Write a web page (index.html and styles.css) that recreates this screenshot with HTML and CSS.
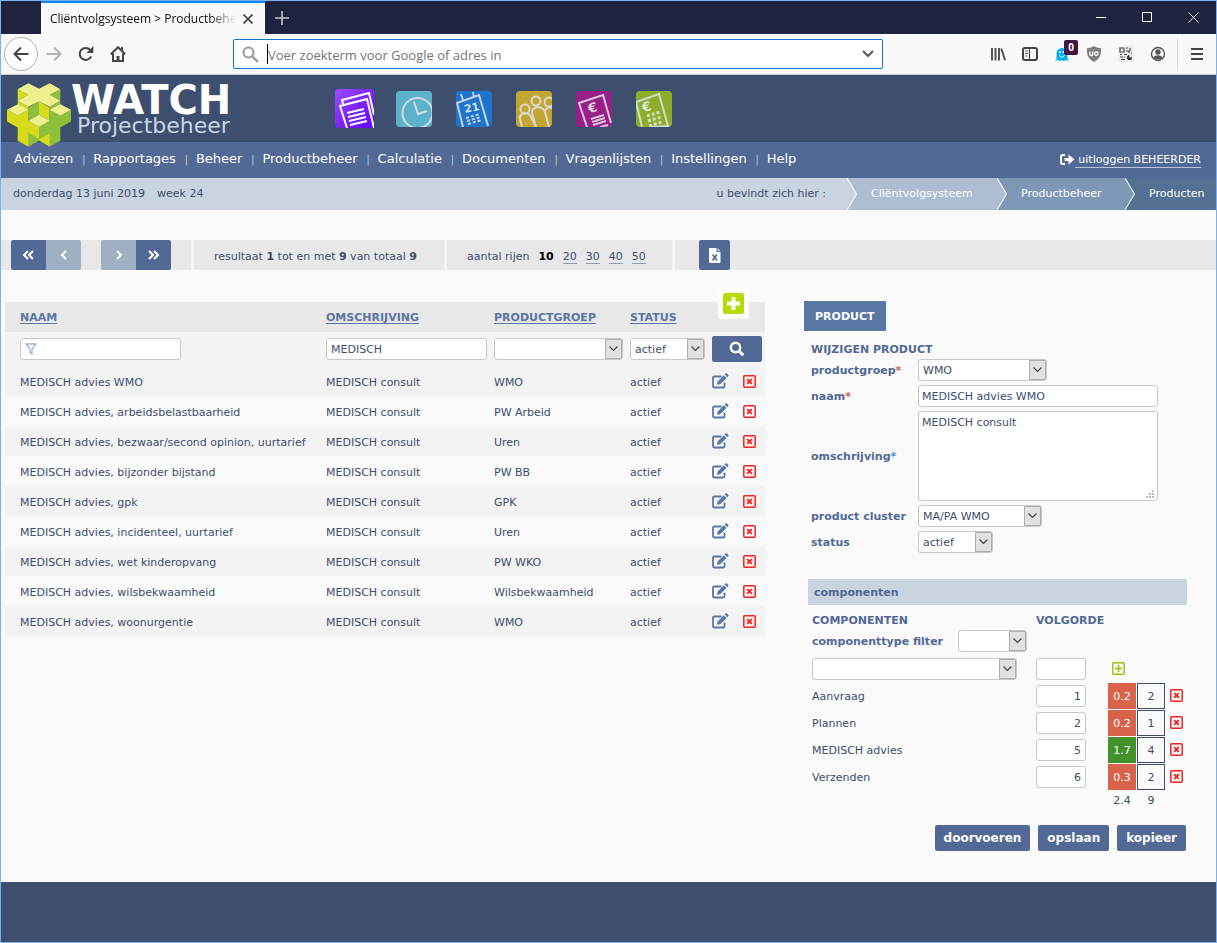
FILE: index.html
```html
<!DOCTYPE html>
<html lang="nl">
<head>
<meta charset="utf-8">
<meta name="viewport" content="width=device-width, initial-scale=1">
<title>Cliëntvolgsysteem &gt; Productbeheer</title>
<link rel="stylesheet" href="styles.css">
</head>
<body>
<svg class="sprite" aria-hidden="true">
  <symbol id="edit" viewBox="0 0 17 16"><path d="M9.5 3.5H2.200a1.200 1.200 0 0 0-1.200 1.200v8.600a1.200 1.200 0 0 0 1.200 1.200h9.100a1.200 1.200 0 0 0 1.200-1.200V9.500" fill="none" stroke="#5a76a3" stroke-width="1.800"/><path d="M5 11.800l.6-3.200 6.300-6.300 2.600 2.600-6.300 6.300zM12.600 1.600l1-1a1 1 0 0 1 1.400 0l1.200 1.200a1 1 0 0 1 0 1.400l-1 1z" fill="#5a76a3"/></symbol>
  <symbol id="remove" viewBox="0 0 13 13"><rect x=".8" y=".8" width="11.400" height="11.400" rx="1" fill="none" stroke="#f22020" stroke-width="1.500"/><path d="M4.200 4.200l4.600 4.600M8.800 4.200L4.200 8.800" stroke="#f22020" stroke-width="1.800"/></symbol>
</svg>

<div class="window">
  <header class="titlebar">
    <div class="tab">
      <span class="tab-title">Cliëntvolgsysteem &gt; Productbeheer</span>
      <button class="tab-close" aria-label="Tabblad sluiten"><svg width="10" height="10"><path d="M.5.5l9 9M9.500.5l-9 9" stroke="#444" stroke-width="1.600"/></svg></button>
    </div>
    <button class="tab-new" aria-label="Nieuw tabblad"><svg width="14" height="14"><path d="M7 0v14M0 7h14" stroke="#c4c4cc" stroke-width="1.600"/></svg></button>
    <div class="window-controls">
      <button aria-label="Minimaliseren"><svg width="11" height="11"><path d="M0 5.500h10" stroke="#fff"/></svg></button>
      <button aria-label="Maximaliseren"><svg width="11" height="11"><path d="M.5.5h9v9h-9z" fill="none" stroke="#fff"/></svg></button>
      <button aria-label="Sluiten"><svg width="11" height="11"><path d="M.5.5l10 10M10.500.5l-10 10" stroke="#fff"/></svg></button>
    </div>
  </header>

  <div class="browserbar">
    <button class="back" aria-label="Terug"><svg width="16" height="16"><path d="M15.500 8H1.500M8 1.500L1.500 8 8 14.500" fill="none" stroke="#444" stroke-width="2"/></svg></button>
    <button class="tool" aria-label="Vooruit"><svg width="16" height="16"><path d="M.5 8h14M8 1.500L14.500 8 8 14.500" fill="none" stroke="#b4b4b4" stroke-width="2"/></svg></button>
    <button class="tool" aria-label="Vernieuwen"><svg width="16" height="16"><path d="M13.200 10.400A6 6 0 1 1 12.300 4" fill="none" stroke="#444" stroke-width="2"/><path d="M15.300 0v7H8.600z" fill="#444"/></svg></button>
    <button class="tool" aria-label="Startpagina"><svg width="16" height="16"><path d="M.8 8.200L8 1.200l7.200 7M3 7.500V15h10V7.500" fill="none" stroke="#444" stroke-width="2"/><path d="M6.500 15V10h3v5z" fill="#444"/><path d="M11 1h2v4l-2-2z" fill="#444"/></svg></button>
    <span class="spacer"></span>
    <div class="urlbar">
      <svg width="17" height="17"><circle cx="6.500" cy="6.500" r="5" fill="none" stroke="#999" stroke-width="2"/><path d="M10 10l6 6" stroke="#999" stroke-width="2.400"/></svg>
      <input type="text" aria-label="Adres" placeholder="Voer zoekterm voor Google of adres in">
      <svg width="12" height="8"><path d="M1 1l5 5 5-5" fill="none" stroke="#555" stroke-width="2"/></svg>
    </div>
    <span class="spacer"></span>
    <button class="tool" aria-label="Bibliotheek"><svg width="16" height="16"><path d="M2 2v12.500M5.500 2v12.500M9 2v12.500M11.300 2.500L15 14.300" stroke="#555" stroke-width="2"/></svg></button>
    <button class="tool" aria-label="Zijbalk"><svg width="16" height="16"><rect x="1" y="2" width="14" height="12" rx="2" fill="none" stroke="#444" stroke-width="2"/><path d="M7.500 2v12" stroke="#444"/><path d="M3 5h3M3 7.500h3M3 10h2" stroke="#666"/></svg></button>
    <button class="tool ghost" aria-label="Ghostery"><svg width="16" height="16"><path d="M2.500 13.500V7.500a5.500 5.500 0 0 1 11 0v5l1 2.500-3-1-1.700 1.200L8 14l-2 1.200L4.300 14 1 15z" fill="#00aef0"/><path d="M5.500 9c.5 3 4 3 5 0" fill="none" stroke="#fff"/><circle cx="6" cy="6" r="1" fill="#fff"/><circle cx="9.500" cy="6" r="1" fill="#fff"/></svg><span class="badge">0</span></button>
    <button class="tool" aria-label="uBlock"><svg width="16" height="16"><path d="M8 0c2 1.500 4.500 2 7 2 .4 7-1 11-7 14C2 13 .6 9 1 2c2.500 0 5-.5 7-2z" fill="#808080"/><path d="M4 5.500v2.700a1.400 1.400 0 0 0 2.800 0V5.500" fill="none" stroke="#fff" stroke-width="1.300"/><circle cx="10.300" cy="7.700" r="1.700" fill="none" stroke="#fff" stroke-width="1.300"/></svg></button>
    <button class="tool" aria-label="QR-code"><svg width="16" height="16"><rect width="16" height="16" fill="#eee"/><path d="M2 2h4v4H2zM8 2h2M12 2v3M8 5h3v2M13 7h1M2 8.500h2M6 8.500h3M2 11h3M3 13.500h4M6 11h1" fill="none" stroke="#444" stroke-width="1.200"/><circle cx="11.500" cy="11.500" r="2.600" fill="#333"/><path d="M11.500 11.500V8.500h3v3z" fill="#eee"/></svg></button>
    <button class="tool" aria-label="Account"><svg width="16" height="16"><circle cx="8" cy="8" r="6.500" fill="none" stroke="#555" stroke-width="1.400"/><circle cx="8" cy="6" r="2.700" fill="#555"/><path d="M3.500 11.500c2-3 7-3 9 0C10.500 14.300 5.500 14.300 3.500 11.500z" fill="#555"/></svg></button>
    <button class="tool menu" aria-label="Menu"><svg width="12" height="12"><path d="M0 1h12M0 6h12M0 11h12" stroke="#444" stroke-width="2"/></svg></button>
  </div>

  <div class="app-header">
    <a class="logo" href="#" aria-label="Watch Projectbeheer">
      <svg class="cube" width="64" height="64" viewBox="15 17 192 191">
        <path fill="#d7db1c" d="M47 35l32 17-32 18zM15 97l32 17 32-17v33l32 18v40l-32 19-32-17v-40l-32-18zM111 72l32 18v40l-32-18zM111 148v40l32 19v-77z"/>
        <path fill="#8fc03c" d="M175 35l-32 17 32 18zM111 72L79 90v40l32-18zM79 207v-42l32 20v4zM111 148l32-18v38l-32 17zM143 97l32 17 32-17v35l-32 18v40l-32 17z"/>
        <path fill="#d7db1c" d="M111 187l32-19v39l-32-19zM47 70l32 18v20L47 82z"/>
        <path fill="#8fc03c" d="M143 88l32-18v25l-32 15z"/>
        <path fill="#eef08e" d="M79 17l32 17 32-17 32 18-32 17 32 18-32 18-32-16-32 16-32-18 32-18-32-17zM15 97l32-17 32 17-32 17zM207 97l-32-17-32 17 32 17zM111 112l32 18-32 18-32-18z"/>
      </svg>
      <span class="wordmark"><b>WATCH</b><span>Projectbeheer</span></span>
    </a>
    <div class="apps">
      <a href="#" class="app app-active" aria-label="Adviezen"><svg viewBox="0 0 39 39"><defs><linearGradient id="g1" x2="1" y2="1"><stop stop-color="#9a4cff"/><stop offset="1" stop-color="#6100ff"/></linearGradient></defs><rect width="39" height="39" rx="4" fill="url(#g1)"/><g fill="none" stroke="#fff" stroke-width="2"><path d="M8 15l-1-4L34 4l5 22"/><path d="M12 39L5 17l27-7 7 29"/><path d="M12 24l17-4M13 28l17-4M14 32l17-4M15 36l17-4"/></g></svg></a>
      <a href="#" class="app" aria-label="Uren"><svg viewBox="0 0 36 36"><rect width="36" height="36" rx="4" fill="#5bb2c9"/><g fill="none" stroke="#d0dce4" stroke-width="2"><circle cx="21.500" cy="22" r="15"/><path d="M18 11l4 12 9-3"/></g></svg></a>
      <a href="#" class="app" aria-label="Agenda"><svg viewBox="0 0 36 36"><rect width="36" height="36" rx="4" fill="#1d74cd"/><g fill="none" stroke="#c6d2e2" stroke-width="2"><path d="M7 36L1 12l22-8 9 31M5 3l2 6M17 1l1 6"/><path d="M10 27l14-4M11 30l14-4M12 33l14-4" stroke-dasharray="3 2"/></g><text x="9" y="22" transform="rotate(-12 9 22)" fill="#d6dfe9" class="day">21</text></svg></a>
      <a href="#" class="app" aria-label="Relaties"><svg viewBox="0 0 36 36"><rect width="36" height="36" rx="4" fill="#c2a631"/><g fill="none" stroke="#dcd8cf" stroke-width="2"><circle cx="9" cy="18" r="4.500"/><circle cx="20" cy="10" r="4.500"/><circle cx="33" cy="11" r="4.500"/><path d="M6 36L4 28c-1-6 8-8 11-2l5 10M20 36l-4-14c0-7 10-8 13-1l4 15M29 20c1-3 4-4 7-3"/></g></svg></a>
      <a href="#" class="app" aria-label="Facturen"><svg viewBox="0 0 36 36"><rect width="36" height="36" rx="4" fill="#991f88"/><g fill="none" stroke="#d8c6da" stroke-width="2"><path d="M11 36L3 12l24-8 8 28"/><path d="M15 28l13-4M16 31l13-4M17 34l13-4M24 36l8-2"/></g><text x="13" y="22" transform="rotate(-12 13 22)" fill="#e0d3e2" class="euro">€</text></svg></a>
      <a href="#" class="app" aria-label="Calculatie"><svg viewBox="0 0 36 36"><rect width="36" height="36" rx="4" fill="#8ead2c"/><g fill="none" stroke="#d3dccb" stroke-width="2"><path d="M6 36L0 11l23-8 9 32-17 1"/><path d="M11 25l13-4M12 30l13-4M13 35l13-4" stroke-width="3" stroke-dasharray="3 2"/></g><text x="7" y="21" transform="rotate(-12 7 21)" fill="#dfe5d8" class="euro">€</text></svg></a>
    </div>
  </div>

  <nav class="nav">
    <ul class="nav-list">
      <li><a href="#">Adviezen</a></li><li><a href="#">Rapportages</a></li><li><a href="#">Beheer</a></li><li><a href="#">Productbeheer</a></li><li><a href="#">Calculatie</a></li><li><a href="#">Documenten</a></li><li><a href="#">Vragenlijsten</a></li><li><a href="#">Instellingen</a></li><li><a href="#">Help</a></li>
    </ul>
    <a class="logout" href="#"><svg width="15" height="12" aria-hidden="true"><path d="M5 1H2.500A1.500 1.500 0 0 0 1 2.500v6A1.500 1.500 0 0 0 2.500 10H5" fill="none" stroke="#fff" stroke-width="2"/><path d="M4.500 4h4V.5L14.500 5.500l-6 5V7h-4z" fill="#fff"/></svg><span>&nbsp;uitloggen BEHEERDER</span></a>
  </nav>

  <div class="trail">
    <span class="date">donderdag 13 juni 2019</span><span>week 24</span>
    <span class="here">u bevindt zich hier :</span>
    <a class="crumb crumb-1" href="#"><svg width="10" height="32"><path d="M0 0l10 16L0 32z" fill="#cad4e0"/><path d="M0 0l9.500 16L0 32" fill="none" stroke="#f4f7fa" stroke-width="1.200"/></svg>Cliëntvolgsysteem</a>
    <a class="crumb crumb-2" href="#"><svg width="10" height="32"><path d="M0 0l10 16L0 32z" fill="#aebdd1"/><path d="M0 0l9.500 16L0 32" fill="none" stroke="#f4f7fa" stroke-width="1.200"/></svg>Productbeheer</a>
    <a class="crumb crumb-3" href="#"><svg width="10" height="32"><path d="M0 0l10 16L0 32z" fill="#7e97b7"/><path d="M0 0l9.500 16L0 32" fill="none" stroke="#dfe7ef" stroke-width="1.200"/></svg>Producten</a>
  </div>

  <main class="main">
    <div class="pager">
      <div class="pager-group pager-nav">
        <span class="pair"><button aria-label="Eerste"><svg width="13" height="10"><path d="M6 1L2 5l4 4M11 1L7 5l4 4" fill="none" stroke="#fff" stroke-width="2"/></svg></button><button class="off" disabled aria-label="Vorige"><svg width="8" height="10"><path d="M6 1L2 5l4 4" fill="none" stroke="#fff" stroke-width="2"/></svg></button></span>
        <span class="pair"><button class="off" disabled aria-label="Volgende"><svg width="8" height="10"><path d="M2 1l4 4-4 4" fill="none" stroke="#fff" stroke-width="2"/></svg></button><button aria-label="Laatste"><svg width="13" height="10"><path d="M2 1l4 4-4 4M7 1l4 4-4 4" fill="none" stroke="#fff" stroke-width="2"/></svg></button></span>
      </div>
      <div class="pager-group pager-result"><span>resultaat <b>1</b> tot en met <b>9</b> van totaal <b>9</b></span></div>
      <div class="pager-group pager-rows"><span>aantal rijen</span><b>10</b><a href="#">20</a><a href="#">30</a><a href="#">40</a><a href="#">50</a></div>
      <div class="pager-group pager-export"><button aria-label="Excel"><svg width="12" height="15"><path d="M1 0h6.500v4H11.500v10a1 1 0 0 1-1 1H1a1 1 0 0 1-1-1V1a1 1 0 0 1 1-1z" fill="#fff"/><path d="M8.500 0l3 3h-3z" fill="#d5dceb"/><path d="M3.500 6.500l4.500 6M8 6.500l-4.500 6" stroke="#536995" stroke-width="1.700"/></svg></button></div>
    </div>

    <div class="panels">
      <section class="list">
        <button class="add" aria-label="Toevoegen"><svg width="21" height="21"><rect width="21" height="21" rx="2" fill="#b4dc00"/><path d="M10.500 4v13M4 10.500h13" stroke="#fff" stroke-width="4"/></svg></button>
        <table class="products">
          <colgroup><col class="c-name"><col class="c-desc"><col class="c-group"><col class="c-status"><col class="c-act"></colgroup>
          <thead>
            <tr><th><a href="#">NAAM</a></th><th><a href="#">OMSCHRIJVING</a></th><th><a href="#">PRODUCTGROEP</a></th><th><a href="#">STATUS</a></th><th></th></tr>
          </thead>
          <tbody>
            <tr class="filter">
              <td><input class="field w-filter funnel" type="text" aria-label="Naam"></td>
              <td><input class="field w-filter" type="text" aria-label="Omschrijving" value="MEDISCH"></td>
              <td><select class="field w-129" aria-label="Productgroep"><option></option></select></td>
              <td><select class="field w-75" aria-label="Status"><option>actief</option></select></td>
              <td><button class="search" aria-label="Zoeken"><svg width="16" height="16"><circle cx="6.500" cy="6.500" r="4.700" fill="none" stroke="#fff" stroke-width="2.400"/><path d="M9.800 9.800l4.500 4.500" stroke="#fff" stroke-width="3"/></svg></button></td>
            </tr>
            <tr><td>MEDISCH advies WMO</td><td>MEDISCH consult</td><td>WMO</td><td>actief</td><td><div class="acts"><button aria-label="Bewerken"><svg width="17" height="16"><use href="#edit"/></svg></button><button aria-label="Verwijderen"><svg width="13" height="13"><use href="#remove"/></svg></button></div></td></tr>
            <tr><td>MEDISCH advies, arbeidsbelastbaarheid</td><td>MEDISCH consult</td><td>PW Arbeid</td><td>actief</td><td><div class="acts"><button aria-label="Bewerken"><svg width="17" height="16"><use href="#edit"/></svg></button><button aria-label="Verwijderen"><svg width="13" height="13"><use href="#remove"/></svg></button></div></td></tr>
            <tr><td>MEDISCH advies, bezwaar/second opinion, uurtarief</td><td>MEDISCH consult</td><td>Uren</td><td>actief</td><td><div class="acts"><button aria-label="Bewerken"><svg width="17" height="16"><use href="#edit"/></svg></button><button aria-label="Verwijderen"><svg width="13" height="13"><use href="#remove"/></svg></button></div></td></tr>
            <tr><td>MEDISCH advies, bijzonder bijstand</td><td>MEDISCH consult</td><td>PW BB</td><td>actief</td><td><div class="acts"><button aria-label="Bewerken"><svg width="17" height="16"><use href="#edit"/></svg></button><button aria-label="Verwijderen"><svg width="13" height="13"><use href="#remove"/></svg></button></div></td></tr>
            <tr><td>MEDISCH advies, gpk</td><td>MEDISCH consult</td><td>GPK</td><td>actief</td><td><div class="acts"><button aria-label="Bewerken"><svg width="17" height="16"><use href="#edit"/></svg></button><button aria-label="Verwijderen"><svg width="13" height="13"><use href="#remove"/></svg></button></div></td></tr>
            <tr><td>MEDISCH advies, incidenteel, uurtarief</td><td>MEDISCH consult</td><td>Uren</td><td>actief</td><td><div class="acts"><button aria-label="Bewerken"><svg width="17" height="16"><use href="#edit"/></svg></button><button aria-label="Verwijderen"><svg width="13" height="13"><use href="#remove"/></svg></button></div></td></tr>
            <tr><td>MEDISCH advies, wet kinderopvang</td><td>MEDISCH consult</td><td>PW WKO</td><td>actief</td><td><div class="acts"><button aria-label="Bewerken"><svg width="17" height="16"><use href="#edit"/></svg></button><button aria-label="Verwijderen"><svg width="13" height="13"><use href="#remove"/></svg></button></div></td></tr>
            <tr><td>MEDISCH advies, wilsbekwaamheid</td><td>MEDISCH consult</td><td>Wilsbekwaamheid</td><td>actief</td><td><div class="acts"><button aria-label="Bewerken"><svg width="17" height="16"><use href="#edit"/></svg></button><button aria-label="Verwijderen"><svg width="13" height="13"><use href="#remove"/></svg></button></div></td></tr>
            <tr><td>MEDISCH advies, woonurgentie</td><td>MEDISCH consult</td><td>WMO</td><td>actief</td><td><div class="acts"><button aria-label="Bewerken"><svg width="17" height="16"><use href="#edit"/></svg></button><button aria-label="Verwijderen"><svg width="13" height="13"><use href="#remove"/></svg></button></div></td></tr>
          </tbody>
        </table>
      </section>

      <form class="detail">
        <a class="detail-tab" href="#">PRODUCT</a>
        <h2 class="detail-title">WIJZIGEN PRODUCT</h2>
        <div class="form-grid">
          <label for="groep">productgroep<span class="req">*</span></label>
          <select id="groep" class="field w-129"><option>WMO</option></select>
          <label for="naam">naam<span class="req">*</span></label>
          <input id="naam" class="field w-wide" type="text" value="MEDISCH advies WMO">
          <label for="oms">omschrijving<span class="opt">*</span></label>
          <textarea id="oms" class="field w-wide">MEDISCH consult</textarea>
          <label for="cluster">product cluster</label>
          <select id="cluster" class="field w-124"><option>MA/PA WMO</option></select>
          <label for="status">status</label>
          <select id="status" class="field w-75"><option>actief</option></select>
        </div>

        <h3 class="bar">componenten</h3>
        <table class="components">
          <colgroup><col class="k-name"><col class="k-order"><col class="k-a"><col class="k-b"><col></colgroup>
          <thead>
            <tr><th>COMPONENTEN</th><th colspan="4">VOLGORDE</th></tr>
            <tr class="type-row"><th colspan="5"><span class="type"><label for="ctype">componenttype filter</label><select id="ctype" class="field w-69"><option></option></select></span></th></tr>
          </thead>
          <tbody>
            <tr><td><select class="field w-205" aria-label="Component"><option></option></select></td><td><input class="field w-50" type="text" aria-label="Volgorde"></td><td colspan="3"><button class="icon-btn plus" type="button" aria-label="Toevoegen"><svg width="13" height="13"><rect x=".8" y=".8" width="11.400" height="11.400" rx="1" fill="none" stroke="#a0c010" stroke-width="1.500"/><path d="M6.500 3v7M3 6.500h7" stroke="#a0c010" stroke-width="1.600"/></svg></button></td></tr>
            <tr><td class="name">Aanvraag</td><td><input class="field w-50" type="text" aria-label="Volgorde Aanvraag" value="1"></td><td><span class="chip red">0.2</span></td><td><span class="chip box">2</span></td><td><button class="icon-btn" type="button" aria-label="Verwijderen"><svg width="13" height="13"><use href="#remove"/></svg></button></td></tr>
            <tr><td class="name">Plannen</td><td><input class="field w-50" type="text" aria-label="Volgorde Plannen" value="2"></td><td><span class="chip red">0.2</span></td><td><span class="chip box">1</span></td><td><button class="icon-btn" type="button" aria-label="Verwijderen"><svg width="13" height="13"><use href="#remove"/></svg></button></td></tr>
            <tr><td class="name">MEDISCH advies</td><td><input class="field w-50" type="text" aria-label="Volgorde MEDISCH advies" value="5"></td><td><span class="chip green">1.7</span></td><td><span class="chip box">4</span></td><td><button class="icon-btn" type="button" aria-label="Verwijderen"><svg width="13" height="13"><use href="#remove"/></svg></button></td></tr>
            <tr><td class="name">Verzenden</td><td><input class="field w-50" type="text" aria-label="Volgorde Verzenden" value="6"></td><td><span class="chip red">0.3</span></td><td><span class="chip box">2</span></td><td><button class="icon-btn" type="button" aria-label="Verwijderen"><svg width="13" height="13"><use href="#remove"/></svg></button></td></tr>
          </tbody>
          <tfoot><tr><td></td><td></td><td><span class="sum">2.4</span></td><td><span class="sum">9</span></td><td></td></tr></tfoot>
        </table>
        <div class="buttons"><button type="button">doorvoeren</button><button type="button">opslaan</button><button type="button">kopieer</button></div>
      </form>
    </div>
  </main>
  <footer class="footer"></footer>
</div>
</body>
</html>
```

FILE: styles.css
```css
*, *::before, *::after { box-sizing: border-box; }
body { margin: 0; background: #fafafa; color: #3d4e6e; font: 11px/16px "DejaVu Sans", Verdana, sans-serif; }
button, input, select, textarea { font: inherit; color: inherit; margin: 0; }
button { border: 0; padding: 0; background: none; display: flex; align-items: center; justify-content: center; cursor: pointer; }
svg { display: block; flex: none; }
a { color: inherit; text-decoration: none; }
.sprite { position: absolute; width: 0; height: 0; }
.window { min-height: 100vh; display: flex; flex-direction: column; border: 1px solid #7ab4f0; }

/* Browser chrome */
.titlebar { display: flex; height: 33px; padding-left: 40px; background: #202340; }
.tab { display: flex; align-items: center; width: 224px; padding: 0 12px 0 9px; background: #f9f9fa; border-top: 2px solid #0a84ff; }
.tab-title { flex: 1; overflow: hidden; white-space: nowrap; color: #0c0c0d; font: 12px/18px "Open Sans", "Noto Sans", sans-serif; margin-right: 6px; -webkit-mask-image: linear-gradient(90deg, #000 85%, transparent); mask-image: linear-gradient(90deg, #000 85%, transparent); }
.tab-new { width: 34px; }
.window-controls { display: flex; margin-left: auto; }
.window-controls button { width: 46px; }
.browserbar { display: flex; align-items: center; height: 41px; padding: 0 3px; background: #f9f9fa; border-bottom: 1px solid #ccc; }
.back { width: 34px; height: 34px; border: 1px solid #b1b1b1; border-radius: 50%; background: #fff; }
.tool { width: 32px; height: 32px; }
.spacer { flex: 1; }
.urlbar { display: flex; align-items: center; flex: 0 1 650px; min-width: 0; height: 30px; padding: 0 8px; border: 1px solid #0a78d7; border-radius: 2px; background: #fff; }
.urlbar input { flex: 1; min-width: 0; margin-left: 8px; padding: 2px 0 0; border: 0; outline: 0; border-left: 1px solid #000; height: 20px; background: none; font: 13px/18px "Open Sans", "Noto Sans", sans-serif; }
.urlbar input::placeholder { color: #757575; opacity: 1; }
.ghost { position: relative; }
.badge { position: absolute; top: 2px; right: 0; width: 14px; height: 15px; border-radius: 2px; background: #45173f; color: #fff; font: bold 10px/15px "Open Sans", sans-serif; text-align: center; }
.menu { width: 39px; border-left: 1px solid #d7d7db; margin-left: 3px; margin-right: -3px; }

/* Application header */
.app-header { display: flex; height: 67px; padding-left: 6px; background: #3d4e6e; }
.logo { position: relative; z-index: 1; display: flex; width: 328px; }
.cube { margin-top: 8px; }
.wordmark { display: flex; flex-direction: column; padding-top: 7px; color: #fff; font-size: 40px; line-height: 36px; }
.wordmark span { margin-left: 6px; color: #c9d5e5; font-size: 22px; line-height: 16px; }
.apps { display: flex; align-items: center; gap: 24px; }
.app { width: 36px; height: 36px; }
.app-active { width: 39px; height: 39px; margin-right: -2px; }
.app svg { width: 100%; height: 100%; }
.day { font-size: 11px; font-weight: bold; }
.euro { font-size: 13px; font-weight: bold; }
.nav { display: flex; align-items: center; height: 36px; padding: 0 15px 0 13px; background: #536995; color: #fff; font-size: 13px; }
.nav-list { display: flex; margin: 0; padding: 0; list-style: none; }
.nav-list li { display: flex; }
.nav-list li + li::before { content: "|"; width: 20px; padding-left: 1px; text-align: center; font-size: 11px; line-height: 18px; color: #e0b9a0; }
.nav-list li:nth-child(2)::before, .nav-list li:nth-child(4)::before, .nav-list li:nth-child(5)::before, .nav-list li:nth-child(6)::before, .nav-list li:nth-child(n+8)::before { color: #9cc6ea; }
.logout { display: flex; align-items: center; margin-left: auto; font-size: 11px; }
.logout span { border-bottom: 1px solid #b9c4d8; line-height: 14px; }
.trail { display: flex; align-items: center; height: 32px; padding-left: 12px; background: #cad4e0; }
.date { margin-right: 12px; }
.here { margin: 0 21px 0 auto; }
.crumb { display: flex; align-items: center; color: #fff; }
.crumb svg { margin-right: 14px; }
.crumb-1 { width: 150px; background: #aebdd1; }
.crumb-2 { width: 128px; background: #7e97b7; }
.crumb-3 { width: 91px; background: #547194; }

/* Pager */
.main { padding: 30px 0 31px; }
.pager { display: flex; gap: 3px; height: 30px; background: #f5f5f5; }
.pager-group { display: flex; align-items: center; background: #e8e8e8; white-space: nowrap; }
.pager-nav { gap: 20px; padding: 0 20px 0 10px; }
.pair { display: flex; border-radius: 2px; overflow: hidden; }
.pager-nav button { width: 35px; height: 30px; background: #536995; }
.pager-nav .off { background: #9fb0c3; }
.pager-result { min-width: 250px; padding: 3px 20px 0; }
.pager-rows { min-width: 225px; gap: 9px; padding: 3px 20px 0; }
.pager-rows b { color: #000; }
.pager-rows a { border-bottom: 1px solid #8c9bb5; line-height: 13px; }
.pager-export { flex: 1; padding-left: 24px; }
.pager-export button { width: 31px; height: 30px; border-radius: 2px; background: #536995; }

/* Panels */
.panels { display: flex; gap: 39px; padding: 31px 29px 0 4px; }
.list { position: relative; flex: 0 1 760px; padding-top: 1px; }
.add { position: absolute; top: -13px; right: 16px; width: 31px; height: 31px; border-radius: 3px; background: #fff; }
.products { width: 100%; table-layout: fixed; border-collapse: collapse; }
.c-desc { width: 168px; }
.c-group { width: 136px; }
.c-status { width: 82px; }
.c-act { width: 53px; }
.products th, .products td { height: 30px; padding: 3px 0 0; text-align: left; white-space: nowrap; }
.products td:last-child { padding-top: 0; }
.products th:first-child, .products td:first-child { padding-left: 15px; }
.products th { background: #e8e8e8; color: #5a76a3; padding-top: 2px; }
.products th a { text-decoration: underline; text-underline-offset: 2px; }
.products .filter td { height: 34px; padding-top: 0; background: #f3f3f3; }
.products tbody tr:nth-child(even) { background: #f3f3f3; }
.acts { display: flex; align-items: center; gap: 14px; }
.search { width: 50px; height: 26px; border-radius: 2px; background: #536995; }

/* Fields */
.field { display: block; height: 22px; padding: 1px 4px 0; border: 1px solid #c8c8c8; border-radius: 3px; background: #fff; outline: 0; line-height: 19px; }
select.field { appearance: none; -webkit-appearance: none; background: #fff url("data:image/svg+xml,%3Csvg xmlns='http://www.w3.org/2000/svg' width='17' height='20'%3E%3Cpath d='M.5.500h16v19H.5z' fill='%23e1e1e1' stroke='%23adadad'/%3E%3Cpath d='M4.500 7.500l4 4 4-4' fill='none' stroke='%23444' stroke-width='1.200'/%3E%3C/svg%3E") no-repeat right center; }
textarea.field { height: 90px; padding: 3px 3px; line-height: 16px; resize: none; background: #fff url("data:image/svg+xml,%3Csvg xmlns='http://www.w3.org/2000/svg' width='8' height='8'%3E%3Cpath d='M6 0h2v2H6zM3 3h2v2H3zM6 3h2v2H6zM0 6h2v2H0zM3 6h2v2H3zM6 6h2v2H6z' fill='%23bbb'/%3E%3C/svg%3E") no-repeat right 3px bottom 2px; }
.funnel { background: #fff url("data:image/svg+xml,%3Csvg xmlns='http://www.w3.org/2000/svg' width='12' height='12'%3E%3Cpath d='M1 1h10L7 6v5L5 9.500V6z' fill='none' stroke='%239fb4cc' stroke-width='1.300'/%3E%3C/svg%3E") no-repeat 4px 4px; }
.w-filter { width: 161px; }
.w-wide { width: 240px; padding-left: 3px; }
.w-205 { width: 205px; }
.w-129 { width: 129px; }
.w-124 { width: 124px; }
.w-75 { width: 75px; }
.w-69 { width: 69px; }
.w-50 { width: 50px; text-align: right; }

/* Detail form */
.detail { flex: 1; min-width: 383px; }
.detail-tab { display: inline-block; padding: 1px 11px 0; background: #5a76a3; color: #fff; font-weight: bold; line-height: 29px; }
.detail-title { margin: 10px 0 0 7px; font-size: 11px; line-height: 18px; color: #536995; }
.form-grid { display: grid; grid-template-columns: 107px 1fr; gap: 4px 0; align-items: center; margin: 0 0 0 7px; }
.detail label { padding-top: 2px; font-weight: bold; color: #536995; white-space: nowrap; }
.req { color: #d9604a; }
.opt { color: #4a90d0; }
.bar { margin: 26px 0 0 4px; padding: 1px 0 0 6px; background: #cad4e0; color: #536995; font-size: 11px; line-height: 25px; }
.components { table-layout: fixed; border-collapse: collapse; width: calc(100% - 8px); margin-left: 8px; }
.k-name { width: 224px; }
.k-order { width: 72px; }
.k-a { width: 29px; }
.k-b { width: 33px; }
.components th { height: 25px; padding: 6px 0 0; text-align: left; color: #536995; }
.components .type-row th { height: 25px; padding: 0; vertical-align: top; }
.type { display: flex; align-items: center; gap: 15px; }
.components td { height: 27px; padding: 0; }
.components td.name { padding-top: 2px; }
.components tfoot td { height: 20px; padding-top: 2px; }
.chip { display: block; width: 28px; height: 26px; line-height: 28px; text-align: center; color: #fff; }
.red { background: #d9634a; }
.green { background: #41922b; }
.box { border: 1px solid #3d4e6e; line-height: 26px; color: #3d4e6e; }
.sum { display: block; width: 28px; text-align: center; }
.plus { margin-left: 4px; }
.buttons { display: flex; justify-content: flex-end; gap: 8px; margin: 15px 1px 0 0; }
.buttons button { padding: 0 9px; height: 26px; border-radius: 2px; background: #536995; color: #fff; font-size: 12px; font-weight: bold; }
.footer { flex: 1; min-height: 60px; background: #3d4e6e; }
```
